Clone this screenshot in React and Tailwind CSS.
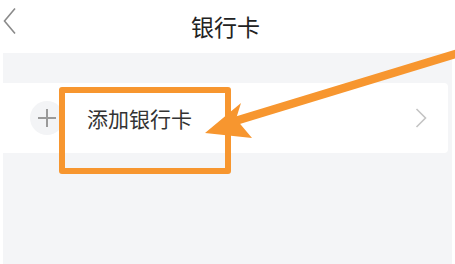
export default function App() {
  return (
    <div
      className="relative w-[455px] h-[264px] bg-white overflow-hidden"
      style={{ fontFamily: '"Noto Sans CJK SC", "Noto Sans", sans-serif' }}
    >
      {/* header */}
      <div className="relative h-[53px] flex items-center justify-center">
        <svg className="absolute left-[2px] top-[7px]" width="16" height="28" viewBox="0 0 16 28">
          <path d="M13 1.5 L2.5 14 L13 26.5" fill="none" stroke="#8a8a8a" strokeWidth="1.6" />
        </svg>
        <span className="text-[23px] leading-none text-[#222] -ml-[4px]">银行卡</span>
      </div>

      {/* body */}
      <div className="mx-[3px] h-[211px] bg-[#f4f5f7] pt-[30px] pr-[4px]">
        <div className="h-[70px] bg-white rounded-r-[4px] flex items-center">
          <div className="ml-[27px] w-[34px] h-[34px] rounded-full bg-[#f3f4f6] flex items-center justify-center">
            <svg width="18" height="18" viewBox="0 0 18 18">
              <path d="M9 0 V18 M0 9 H18" stroke="#9a9a9a" strokeWidth="2" />
            </svg>
          </div>
          <span className="ml-[23px] text-[21px] leading-none text-[#333]">添加银行卡</span>
          <svg className="ml-auto mr-[21px]" width="12" height="20" viewBox="0 0 12 20">
            <path d="M1.5 1 L10.5 10 L1.5 19" fill="none" stroke="#c4c4c4" strokeWidth="1.6" />
          </svg>
        </div>
      </div>

      {/* annotation box */}
      <div className="absolute left-[59px] top-[87px] w-[172px] h-[87px] border-[6px] border-[#f7962f] rounded-[3px]" />

      {/* annotation arrow */}
      <svg className="absolute left-0 top-0" width="455" height="264" viewBox="0 0 455 264">
        <path d="M232 122 L462 52" stroke="#f7962f" strokeWidth="8.5" />
        <path d="M205 133 L241 103 L236 119 L252 138 Z" fill="#f7962f" />
      </svg>
    </div>
  );
}
